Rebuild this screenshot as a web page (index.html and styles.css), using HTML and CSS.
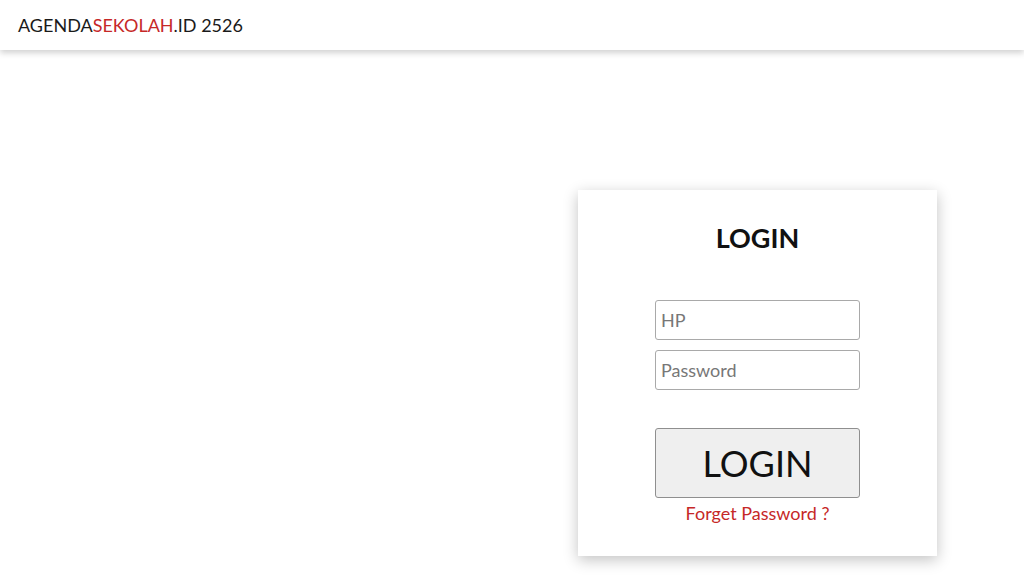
FILE: index.html
```html
<!DOCTYPE html>
<html>
<head>
<meta charset="utf-8">
<link rel="stylesheet" href="styles.css">
</head>
<body>
<header class="topbar">
  <div class="brand">AGENDA<span class="red">SEKOLAH</span>.ID 2526</div>
</header>
<main class="main">
  <div class="card">
    <h1 class="title">LOGIN</h1>
    <form class="form">
      <input class="field" type="text" placeholder="HP">
      <input class="field" type="password" placeholder="Password">
      <button class="btn" type="button">LOGIN</button>
      <a class="forgot" href="#">Forget Password ?</a>
    </form>
  </div>
</main>
</body>
</html>
```
FILE: styles.css
```css
html, body {
  margin: 0;
  padding: 0;
  background: #fff;
  font-family: Lato, "Open Sans", sans-serif;
  color: #111;
}
.topbar {
  height: 50px;
  display: flex;
  align-items: center;
  padding-left: 18px;
  background: #fff;
  box-shadow: 0 3px 6px rgba(0,0,0,0.18);
  position: relative;
}
.brand {
  font-size: 18px;
  color: #1a1a1a;
}
.red { color: #c62828; }
.main {
  display: flex;
  justify-content: flex-end;
  padding: 140px 87px 20px 0;
}
.card {
  width: 359px;
  height: 366px;
  box-sizing: border-box;
  background: #fff;
  box-shadow: 0 4px 14px rgba(0,0,0,0.24);
  display: flex;
  flex-direction: column;
  align-items: center;
  padding-top: 32px;
}
.title {
  margin: 0;
  font-size: 27px;
  font-weight: 700;
  line-height: 32px;
  color: #111;
}
.form {
  margin-top: 46px;
  display: flex;
  flex-direction: column;
  align-items: center;
  width: 205px;
}
.field {
  width: 205px;
  height: 40px;
  box-sizing: border-box;
  border: 1px solid #a9a9a9;
  border-radius: 3px;
  padding: 0 5px;
  font-family: Lato, sans-serif;
  font-size: 18px;
  color: #333;
  margin-bottom: 10px;
}
.field::placeholder { color: #777; }
.btn {
  margin-top: 28px;
  width: 205px;
  height: 70px;
  box-sizing: border-box;
  background: #efefef;
  border: 1px solid #8f8f8f;
  border-radius: 3px;
  font-family: Lato, sans-serif;
  font-size: 36px;
  color: #111;
  padding: 0;
}
.forgot {
  margin-top: 4px;
  font-size: 18px;
  color: #c62828;
  text-decoration: none;
}
```
